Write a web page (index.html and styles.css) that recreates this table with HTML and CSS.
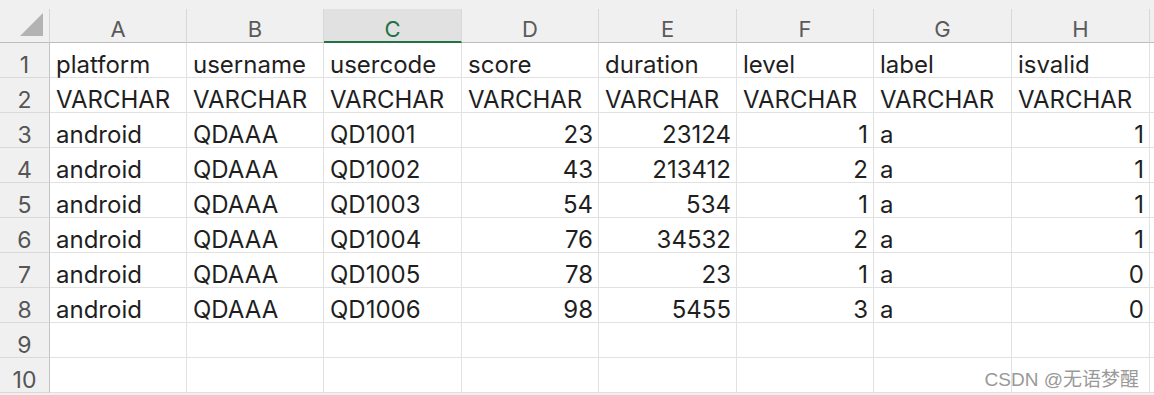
FILE: index.html
```html
<!DOCTYPE html>
<html>
<head>
<meta charset="utf-8">
<link rel="stylesheet" href="styles.css">
</head>
<body>
<div class="sheet">
  <div class="grid">
    <div class="corner"><svg width="24" height="24" viewBox="0 0 24 24"><polygon points="0,23 23,23 23,0" fill="#b3b3b3"/></svg></div>
    <div class="colh">A</div>
    <div class="colh">B</div>
    <div class="colh sel">C</div>
    <div class="colh">D</div>
    <div class="colh">E</div>
    <div class="colh">F</div>
    <div class="colh">G</div>
    <div class="colh">H</div>
    <div class="colh fill"></div>

    <div class="rowh">1</div>
    <div class="c">platform</div><div class="c">username</div><div class="c">usercode</div><div class="c">score</div><div class="c">duration</div><div class="c">level</div><div class="c">label</div><div class="c">isvalid</div><div class="c fill"></div>

    <div class="rowh">2</div>
    <div class="c">VARCHAR</div><div class="c">VARCHAR</div><div class="c">VARCHAR</div><div class="c">VARCHAR</div><div class="c">VARCHAR</div><div class="c">VARCHAR</div><div class="c">VARCHAR</div><div class="c">VARCHAR</div><div class="c fill"></div>

    <div class="rowh">3</div>
    <div class="c">android</div><div class="c">QDAAA</div><div class="c">QD1001</div><div class="c r">23</div><div class="c r">23124</div><div class="c r">1</div><div class="c">a</div><div class="c r">1</div><div class="c fill"></div>

    <div class="rowh">4</div>
    <div class="c">android</div><div class="c">QDAAA</div><div class="c">QD1002</div><div class="c r">43</div><div class="c r">213412</div><div class="c r">2</div><div class="c">a</div><div class="c r">1</div><div class="c fill"></div>

    <div class="rowh">5</div>
    <div class="c">android</div><div class="c">QDAAA</div><div class="c">QD1003</div><div class="c r">54</div><div class="c r">534</div><div class="c r">1</div><div class="c">a</div><div class="c r">1</div><div class="c fill"></div>

    <div class="rowh">6</div>
    <div class="c">android</div><div class="c">QDAAA</div><div class="c">QD1004</div><div class="c r">76</div><div class="c r">34532</div><div class="c r">2</div><div class="c">a</div><div class="c r">1</div><div class="c fill"></div>

    <div class="rowh">7</div>
    <div class="c">android</div><div class="c">QDAAA</div><div class="c">QD1005</div><div class="c r">78</div><div class="c r">23</div><div class="c r">1</div><div class="c">a</div><div class="c r">0</div><div class="c fill"></div>

    <div class="rowh">8</div>
    <div class="c">android</div><div class="c">QDAAA</div><div class="c">QD1006</div><div class="c r">98</div><div class="c r">5455</div><div class="c r">3</div><div class="c">a</div><div class="c r">0</div><div class="c fill"></div>

    <div class="rowh">9</div>
    <div class="c"></div><div class="c"></div><div class="c"></div><div class="c"></div><div class="c"></div><div class="c"></div><div class="c"></div><div class="c"></div><div class="c fill"></div>

    <div class="rowh">10</div>
    <div class="c"></div><div class="c"></div><div class="c"></div><div class="c"></div><div class="c"></div><div class="c"></div><div class="c"></div><div class="c"></div><div class="c fill"></div>
  </div>
  <div class="watermark">CSDN @无语梦醒</div>
</div>
</body>
</html>
```
FILE: styles.css
```css
html, body {
  margin: 0;
  padding: 0;
  background: #ffffff;
}
.sheet {
  position: relative;
  width: 1154px;
  height: 395px;
  overflow: hidden;
  background: #f0f0f0;
  padding-top: 9px;
  box-sizing: border-box;
  font-family: Inter, "Noto Sans CJK SC", sans-serif;
}
.grid {
  display: grid;
  grid-template-columns: 50px 137px 137px 138px 137px 138px 137px 138px 138px 1fr;
  grid-template-rows: 34px repeat(10, 35px);
}
.corner {
  display: flex;
  align-items: flex-end;
  justify-content: flex-end;
  padding: 0 5px 5px 0;
  border-right: 1px solid #d6d6d6;
  border-bottom: 1px solid #bdbdbd;
  box-sizing: border-box;
}
.colh {
  display: flex;
  align-items: center;
  justify-content: center;
  font-size: 22px;
  color: #5a5a5a;
  background: #f0f0f0;
  border-right: 1px solid #d8d8d8;
  border-bottom: 1px solid #bdbdbd;
  box-sizing: border-box;
  padding-top: 7px;
}
.colh.sel {
  background: #e1e1e1;
  color: #217346;
  border-bottom: 2px solid #217346;
  padding-top: 8px;
}
.colh.fill {
  border-right: none;
}
.rowh {
  display: flex;
  align-items: flex-end;
  justify-content: center;
  font-size: 23px;
  line-height: 1;
  color: #555555;
  background: #f0f0f0;
  border-right: 1px solid #c4c4c4;
  border-bottom: 1px solid #d9d9d9;
  box-sizing: border-box;
  padding-bottom: 0;
}
.c {
  display: flex;
  align-items: flex-end;
  justify-content: flex-start;
  font-size: 24px;
  line-height: 1;
  color: #1f1f1f;
  background: #ffffff;
  border-right: 1px solid #e1e1e1;
  border-bottom: 1px solid #e1e1e1;
  box-sizing: border-box;
  padding: 0 5px 0 6px;
  white-space: nowrap;
}
.c.r {
  justify-content: flex-end;
}
.c.fill {
  border-right: none;
}
.watermark {
  position: absolute;
  right: 15px;
  top: 364px;
  font-size: 19px;
  color: #999999;
  font-family: "Liberation Sans", "Noto Sans CJK SC", sans-serif;
}
```
